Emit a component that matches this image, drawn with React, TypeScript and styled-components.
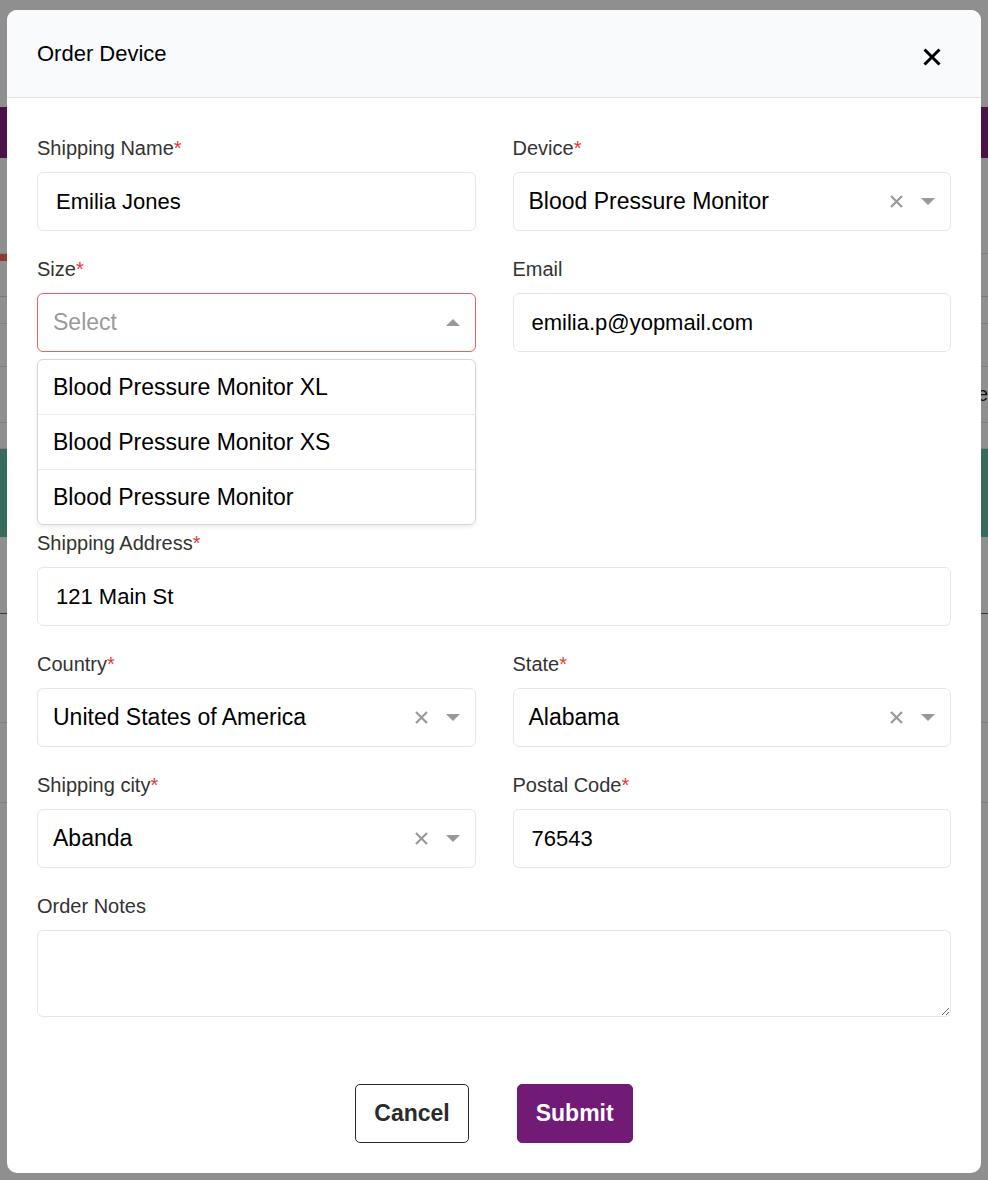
import React from "react";
import styled, { createGlobalStyle } from "styled-components";

const GlobalStyle = createGlobalStyle`
  * { box-sizing: border-box; }
  body {
    margin: 0;
    font-family: "Liberation Sans", Arial, Helvetica, sans-serif;
    background: #ffffff;
  }
`;

/* ---- page behind the modal ---- */
const Page = styled.div`
  width: 988px;
  height: 1180px;
  padding-top: 107px;
  background: #ffffff;
  overflow: hidden;
`;

const Band = styled.div<{ $h: number; $bg: string; $half?: boolean }>`
  height: ${(p) => p.$h}px;
  width: ${(p) => (p.$half ? "50%" : "100%")};
  background: ${(p) => p.$bg};
`;

const TableRow = styled.div<{ $h: number; $line?: string }>`
  height: ${(p) => p.$h}px;
  border-bottom: 1px solid ${(p) => p.$line || "#e4e4e4"};
  display: flex;
  justify-content: flex-end;
  align-items: center;
  font-size: 20px;
  color: #222;
`;

const Overlay = styled.div`
  position: fixed;
  inset: 0;
  background: rgba(0, 0, 0, 0.44);
  padding: 10px 7px;
`;

/* ---- modal ---- */
const Modal = styled.div`
  width: 974px;
  background: #ffffff;
  border-radius: 10px;
  overflow: hidden;
`;

const Header = styled.div`
  height: 88px;
  background: #f9fafb;
  border-bottom: 1px solid #e3e4e6;
  display: flex;
  align-items: center;
  justify-content: space-between;
  padding: 0 40px 0 30px;
`;

const Title = styled.h2`
  margin: 0;
  font-size: 22px;
  font-weight: 400;
  color: #000;
  padding-top: 0;
`;

const CloseButton = styled.button`
  border: 0;
  background: none;
  padding: 0;
  width: 18px;
  height: 18px;
  margin-top: 6px;
  display: flex;
  cursor: pointer;
`;

const Body = styled.div`
  padding: 38px 30px 30px;
`;

const Grid = styled.div`
  display: grid;
  grid-template-columns: 1fr 1fr;
  column-gap: 37px;
  row-gap: 26px;
  align-items: start;
`;

const Field = styled.div<{ $full?: boolean }>`
  grid-column: ${(p) => (p.$full ? "1 / -1" : "auto")};
  display: flex;
  flex-direction: column;
`;

const Label = styled.label`
  font-size: 20px;
  line-height: 24px;
  color: #333;
  margin-bottom: 12px;
`;

const Req = styled.span`
  color: #e53935;
`;

const Input = styled.input`
  height: 59px;
  border: 1px solid #e6e6e6;
  border-radius: 6px;
  padding: 0 18px;
  font-family: inherit;
  font-size: 22px;
  color: #000;
  outline: none;
`;

const TextArea = styled.textarea`
  height: 87px;
  border: 1px solid #e6e6e6;
  border-radius: 6px;
  padding: 12px 18px;
  font-family: inherit;
  font-size: 22px;
  outline: none;
  resize: vertical;
`;

const SelectBox = styled.div<{ $open?: boolean }>`
  height: 59px;
  border: 1px solid ${(p) => (p.$open ? "#e06464" : "#e6e6e6")};
  border-radius: 6px;
  padding: 0 15px;
  display: flex;
  align-items: center;
  gap: 17px;
`;

const SelectValue = styled.span<{ $placeholder?: boolean }>`
  flex: 1;
  font-size: 23px;
  color: ${(p) => (p.$placeholder ? "#9a9a9a" : "#000")};
`;

const Caret = styled.span<{ $up?: boolean }>`
  width: 0;
  height: 0;
  border-left: 7px solid transparent;
  border-right: 7px solid transparent;
  ${(p) =>
    p.$up ? "border-bottom: 7px solid #999;" : "border-top: 7px solid #999;"}
`;

const ClearIcon = styled.svg`
  width: 15px;
  height: 15px;
  display: block;
`;

const Menu = styled.ul`
  list-style: none;
  margin: 7px 0 -20px;
  padding: 0;
  border: 1px solid #d6d6d6;
  border-radius: 6px;
  box-shadow: 0 2px 4px rgba(0, 0, 0, 0.08);
  overflow: hidden;
`;

const MenuItem = styled.li`
  height: 55px;
  display: flex;
  align-items: center;
  padding: 0 15px;
  font-size: 23px;
  color: #000;
  border-top: 1px solid #ececec;
  &:first-child {
    border-top: 0;
    height: 54px;
  }
`;

const Actions = styled.div`
  margin-top: 67px;
  display: flex;
  justify-content: center;
  gap: 48px;
`;

const Button = styled.button<{ $primary?: boolean }>`
  height: 59px;
  padding: 0 18px;
  border-radius: 5px;
  font-family: inherit;
  font-size: 23px;
  font-weight: 700;
  cursor: pointer;
  border: 1px solid ${(p) => (p.$primary ? "#711b76" : "#2a2a2a")};
  background: ${(p) => (p.$primary ? "#711b76" : "#fff")};
  color: ${(p) => (p.$primary ? "#fff" : "#2b2b2b")};
`;

const Clear = () => (
  <ClearIcon viewBox="0 0 15 15">
    <path d="M2 2 L13 13 M13 2 L2 13" stroke="#999" strokeWidth="2.2" />
  </ClearIcon>
);

const Select = ({
  value,
  placeholder,
  open,
}: {
  value?: string;
  placeholder?: string;
  open?: boolean;
}) => (
  <SelectBox $open={open}>
    <SelectValue $placeholder={!value}>{value || placeholder}</SelectValue>
    {value && <Clear />}
    <Caret $up={open} />
  </SelectBox>
);

const sizes = [
  "Blood Pressure Monitor XL",
  "Blood Pressure Monitor XS",
  "Blood Pressure Monitor",
];

export default function App() {
  return (
    <>
      <GlobalStyle />
      <Page>
        <Band $h={51} $bg="#861f82" />
        <TableRow $h={96} />
        <Band $h={7} $bg="#f56a6a" $half />
        <TableRow $h={36} $line="#d8d8d8" />
        <TableRow $h={27} />
        <TableRow $h={43} />
        <TableRow $h={56}>e</TableRow>
        <TableRow $h={26} />
        <Band $h={88} $bg="#5fbda6" />
        <TableRow $h={77} $line="#666" />
        <TableRow $h={109} />
        <TableRow $h={80} />
      </Page>
      <Overlay>
        <Modal>
          <Header>
            <Title>Order Device</Title>
            <CloseButton aria-label="Close">
              <svg width="18" height="18" viewBox="0 0 18 18">
                <path
                  d="M1.5 1.5 L16.5 16.5 M16.5 1.5 L1.5 16.5"
                  stroke="#000"
                  strokeWidth="3"
                />
              </svg>
            </CloseButton>
          </Header>
          <Body>
            <Grid>
              <Field>
                <Label>
                  Shipping Name<Req>*</Req>
                </Label>
                <Input defaultValue="Emilia Jones" />
              </Field>
              <Field>
                <Label>
                  Device<Req>*</Req>
                </Label>
                <Select value="Blood Pressure Monitor" />
              </Field>
              <Field>
                <Label>
                  Size<Req>*</Req>
                </Label>
                <Select placeholder="Select" open />
                <Menu>
                  {sizes.map((s) => (
                    <MenuItem key={s}>{s}</MenuItem>
                  ))}
                </Menu>
              </Field>
              <Field>
                <Label>Email</Label>
                <Input defaultValue="emilia.p@yopmail.com" />
              </Field>
              <Field $full>
                <Label>
                  Shipping Address<Req>*</Req>
                </Label>
                <Input defaultValue="121 Main St" />
              </Field>
              <Field>
                <Label>
                  Country<Req>*</Req>
                </Label>
                <Select value="United States of America" />
              </Field>
              <Field>
                <Label>
                  State<Req>*</Req>
                </Label>
                <Select value="Alabama" />
              </Field>
              <Field>
                <Label>
                  Shipping city<Req>*</Req>
                </Label>
                <Select value="Abanda" />
              </Field>
              <Field>
                <Label>
                  Postal Code<Req>*</Req>
                </Label>
                <Input defaultValue="76543" />
              </Field>
              <Field $full>
                <Label>Order Notes</Label>
                <TextArea />
              </Field>
            </Grid>
            <Actions>
              <Button>Cancel</Button>
              <Button $primary>Submit</Button>
            </Actions>
          </Body>
        </Modal>
      </Overlay>
    </>
  );
}
